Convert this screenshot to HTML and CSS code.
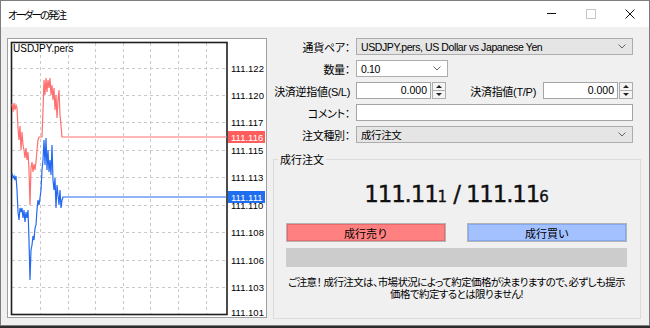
FILE: index.html
```html
<!DOCTYPE html>
<html lang="ja">
<head>
  <meta charset="UTF-8">
  <title>オーダーの発注</title>
  <link rel="stylesheet" href="styles.css">
</head>
<body>
  <div class="window">
    <div class="titlebar">
      <span class="title">オーダーの発注</span>
      <div class="controls">
        <span class="ctl"><svg width="10" height="10"><line x1="0" y1="4.5" x2="9" y2="4.5" stroke="#111"/></svg></span>
        <span class="ctl"><svg width="10" height="10"><rect x="0.5" y="0.5" width="9" height="9" fill="none" stroke="#c6c6c6"/></svg></span>
        <span class="ctl"><svg width="10" height="10"><path d="M0.5 0.5 L9.5 9.5 M9.5 0.5 L0.5 9.5" stroke="#111"/></svg></span>
      </div>
    </div>

    <div class="content">
      <!-- tick chart -->
      <div class="chart">
        <svg width="258" height="278" viewBox="8 39 258 278">
          <g stroke="#c9c9c9" stroke-dasharray="3 3">
            <line x1="40.5" y1="43" x2="40.5" y2="314"/>
            <line x1="68.5" y1="43" x2="68.5" y2="314"/>
            <line x1="95.5" y1="43" x2="95.5" y2="314"/>
            <line x1="123.5" y1="43" x2="123.5" y2="314"/>
            <line x1="150.5" y1="43" x2="150.5" y2="314"/>
            <line x1="178.5" y1="43" x2="178.5" y2="314"/>
            <line x1="206.5" y1="43" x2="206.5" y2="314"/>
            <line x1="12" y1="68.5" x2="226" y2="68.5"/>
            <line x1="12" y1="95.5" x2="226" y2="95.5"/>
            <line x1="12" y1="122.5" x2="226" y2="122.5"/>
            <line x1="12" y1="150.5" x2="226" y2="150.5"/>
            <line x1="12" y1="177.5" x2="226" y2="177.5"/>
            <line x1="12" y1="205.5" x2="226" y2="205.5"/>
            <line x1="12" y1="232.5" x2="226" y2="232.5"/>
            <line x1="12" y1="260.5" x2="226" y2="260.5"/>
            <line x1="12" y1="287.5" x2="226" y2="287.5"/>
          </g>
          <rect x="11.5" y="42.5" width="215.5" height="272" fill="none" stroke="#1e1e1e" stroke-width="1.6"/>
          <text class="symbol" x="13" y="52">USDJPY.pers</text>

          <polyline class="ask" points="12,104 13,112 14,103 15,110 16,105 17,108 18,128 19,140 20,126 21,150 22,132 23,145 24,150 25,158 26,148 27,160 28,152 29,170 30,205 31,168 32,162 33,172 34,164 35,170 36,162 37,150 38,140 39,137 42,137 43,110 44,80 45,95 46,78 47,92 48,80 49,88 50,78 51,95 52,85 53,100 54,88 55,110 56,95 57,118 58,100 59,90 60,115 61,125 62,137 227,137"/>
          <polyline class="bid" points="12,173 13,178 14,176 15,180 16,176 17,190 18,212 19,220 20,208 21,212 22,208 23,218 24,210 25,222 26,212 27,218 28,210 29,240 30,280 31,250 32,245 33,236 34,240 35,228 36,225 37,210 38,200 39,205 40,198 41,190 42,170 43,160 44,140 45,165 46,138 47,170 48,150 49,172 50,160 51,175 52,145 53,180 54,190 55,178 56,208 57,185 58,195 59,205 60,190 61,208 62,200 63,197 227,197"/>

          <g class="scale">
            <text x="231" y="71.5">111.122</text>
            <text x="231" y="98.5">111.120</text>
            <text x="231" y="125.5">111.117</text>
            <text x="231" y="153.5">111.115</text>
            <text x="231" y="180.5">111.113</text>
            <text x="231" y="208.5">111.110</text>
            <text x="231" y="235.5">111.108</text>
            <text x="231" y="263.5">111.106</text>
            <text x="231" y="290.5">111.103</text>
            <text x="231" y="316">111.101</text>
          </g>
          <rect x="228" y="131" width="37" height="12" fill="#ff5c5c"/>
          <text class="tag" x="231" y="140.5">111.116</text>
          <rect x="228" y="191" width="37" height="12" fill="#1f6ef0"/>
          <text class="tag" x="231" y="200.5">111.111</text>
        </svg>
      </div>

      <div class="panel">
        <div class="form">
          <label>通貨ペア：</label>
          <div class="select gray">
            <span>USDJPY.pers, US Dollar vs Japanese Yen</span>
            <svg width="8" height="5"><polyline points="0.5,0.5 4,4 7.5,0.5" fill="none" stroke="#666"/></svg>
          </div>

          <label>数量：</label>
          <div class="row">
            <div class="select short">
              <span>0.10</span>
              <svg width="8" height="5"><polyline points="0.5,0.5 4,4 7.5,0.5" fill="none" stroke="#666"/></svg>
            </div>
          </div>

          <label>決済逆指値(S/L)</label>
          <div class="row">
            <div class="spin">
              <span class="spin-input">0.000</span>
              <span class="spin-btns"><i class="up"></i><i class="down"></i></span>
            </div>
            <label class="tp">決済指値(T/P)</label>
            <div class="spin">
              <span class="spin-input">0.000</span>
              <span class="spin-btns"><i class="up"></i><i class="down"></i></span>
            </div>
          </div>

          <label>コメント：</label>
          <div class="input"></div>

          <label>注文種別：</label>
          <div class="select gray">
            <span>成行注文</span>
            <svg width="8" height="5"><polyline points="0.5,0.5 4,4 7.5,0.5" fill="none" stroke="#666"/></svg>
          </div>
        </div>

        <fieldset class="group">
          <legend>成行注文</legend>
          <div class="quote">111.11<small>1</small> / 111.11<small>6</small></div>
          <div class="buttons">
            <button class="sell">成行売り</button>
            <button class="buy">成行買い</button>
          </div>
          <div class="bar"></div>
          <p class="notice">ご注意！ 成行注文は、市場状況によって約定価格が決まりますので、必ずしも提示<br>価格で約定するとは限りません!</p>
        </fieldset>
      </div>
    </div>
  </div>
</body>
</html>
```

FILE: styles.css
```css
body {
  margin: 0;
  background-color: #2d2d2d;
  font-family: "Liberation Sans", "Noto Sans CJK JP", sans-serif;
  font-size: 11px;
  color: #000;
}

.window {
  width: 648px;
  height: 324px;
  border: 1px solid #7d7d7d;
  background-color: #f0f0f0;
  display: flex;
  flex-direction: column;
}

/* Title bar */
.titlebar {
  height: 26px;
  background-color: white;
  display: flex;
  align-items: center;
  padding-left: 7px;
}

.title {
  flex: 1;
  font-size: 10.5px;
  font-feature-settings: "palt";
  letter-spacing: -2px;
}

.controls {
  display: flex;
}

.ctl {
  width: 39px;
  height: 26px;
  display: flex;
  align-items: center;
  justify-content: center;
}

/* Body */
.content {
  flex: 1;
  display: flex;
  padding: 11px 8px 6px 6px;
}

.chart {
  width: 258px;
  height: 278px;
  border: 1px solid #a0a0a0;
  background-color: white;
}

.chart svg {
  display: block;
}

.chart text {
  font-family: "Liberation Sans", sans-serif;
  font-size: 9.5px;
}

.chart .symbol {
  font-size: 10px;
}

.chart .tag {
  fill: white;
}

.ask,
.bid {
  fill: none;
  stroke-width: 1.2;
}

.ask {
  stroke: #ff6f6f;
}

.bid {
  stroke: #2468f2;
}

.panel {
  flex: 1;
  margin-left: 6px;
  display: flex;
  flex-direction: column;
}

/* Order form */
.form {
  display: grid;
  grid-template-columns: 77px 1fr;
  grid-auto-rows: 17px;
  column-gap: 6px;
  row-gap: 5px;
  padding-right: 8px;
}

.form label {
  align-self: center;
  text-align: right;
  white-space: nowrap;
  font-feature-settings: "palt";
  letter-spacing: -0.3px;
}

.row {
  display: flex;
  align-items: stretch;
}

.select {
  display: flex;
  align-items: center;
  justify-content: space-between;
  padding: 0 6px 0 4px;
  border: 1px solid #adadad;
  background-color: white;
  font-size: 10.5px;
  letter-spacing: -0.4px;
}

.select.gray {
  background-color: #e5e5e5;
}

.select.short {
  width: 80px;
}

.input {
  border: 1px solid #a5a5a5;
  background-color: white;
}

.spin {
  width: 90px;
  display: flex;
}

.spin-input {
  flex: 1;
  border: 1px solid #a5a5a5;
  background-color: white;
  text-align: right;
  padding-right: 3px;
  line-height: 15px;
  font-size: 10.5px;
}

.spin-btns {
  width: 12px;
  margin-left: 1px;
  border: 1px solid #adadad;
  background-color: #f4f4f4;
  display: flex;
  flex-direction: column;
}

.spin-btns i {
  flex: 1;
  display: flex;
  align-items: center;
  justify-content: center;
}

.spin-btns i::after {
  content: "";
  border-left: 3px solid transparent;
  border-right: 3px solid transparent;
}

.spin-btns .up {
  border-bottom: 1px solid #adadad;
}

.spin-btns .up::after {
  border-bottom: 3px solid #222;
}

.spin-btns .down::after {
  border-top: 3px solid #222;
}

.form .tp {
  margin-left: auto;
  margin-right: 7px;
}

/* Market order group */
.group {
  flex: 1;
  margin: 8px 0 0;
  padding: 0 13px 0 12px;
  border: 1px solid #dcdcdc;
}

.group legend {
  margin-left: -8px;
  padding: 0 2px;
}

.quote {
  margin-top: 14px;
  text-align: center;
  font-family: "DejaVu Sans", sans-serif;
  font-size: 23px;
  letter-spacing: -1.2px;
  line-height: 26px;
  color: #111;
  -webkit-text-stroke: 0.35px #111;
}

.quote small {
  font-size: 15px;
  letter-spacing: 0;
}

.buttons {
  display: flex;
  justify-content: space-between;
  margin-top: 13px;
}

.buttons button {
  width: 160px;
  height: 19px;
  padding: 0;
  font-family: "Noto Sans CJK JP", sans-serif;
  font-size: 11px;
  color: #000;
  border: 1px solid #b4b4b4;
}

.sell {
  background-color: #ff8080;
  box-shadow: inset 0 0 0 1px #e86a6a;
}

.buy {
  background-color: #a3c1ff;
  box-shadow: inset 0 0 0 1px #86a8f0;
}

.bar {
  height: 19px;
  margin-top: 6px;
  background-color: #cccccc;
}

.notice {
  margin: 9px 0 0;
  text-align: center;
  font-size: 10.5px;
  line-height: 12px;
  letter-spacing: -0.6px;
  font-feature-settings: "palt";
}
```
